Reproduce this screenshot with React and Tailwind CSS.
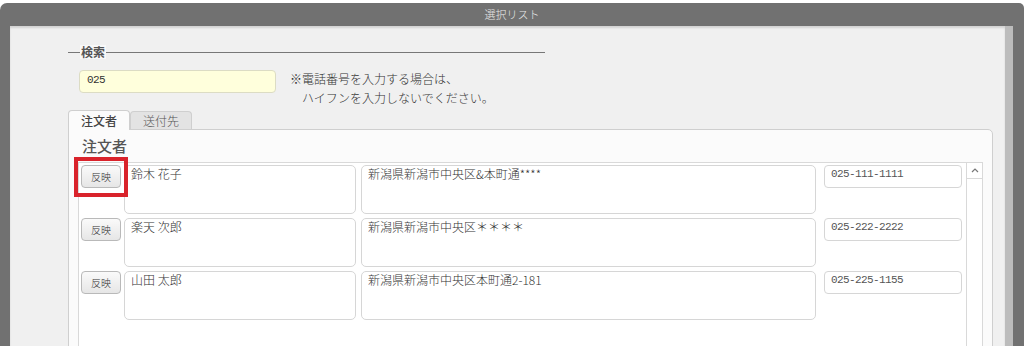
import React from "react";

const jp = { fontFamily: '"Noto Sans CJK JP", "Noto Sans", sans-serif' };
const mono = { fontFamily: '"Liberation Mono", "Noto Sans CJK JP", monospace' };

const rows = [
  { name: "鈴木 花子", addr: "新潟県新潟市中央区&本町通****", tel: "025-111-1111", mark: true },
  { name: "楽天 次郎", addr: "新潟県新潟市中央区＊＊＊＊", tel: "025-222-2222" },
  { name: "山田 太郎", addr: "新潟県新潟市中央区本町通2-181", tel: "025-225-1155" },
];

function Row({ r }) {
  return (
    <div className="flex items-start h-[49px]">
      <div className="relative w-[40px] h-[23px] ml-[2px]">
        <button className="w-[40px] h-[23px] rounded-[4px] border border-[#b9b9b9] bg-gradient-to-b from-[#fafafa] to-[#e6e6e6] text-[10px] leading-none font-light text-[#333] flex items-center justify-center">
          反映
        </button>
        {r.mark && (
          <div className="absolute left-[-7px] top-[-8px] w-[54px] h-[40px] border-[4px] border-[#d9232b]"></div>
        )}
      </div>
      <div className="ml-[3px] w-[232px] h-[49px] rounded-[5px] border border-[#d6d6d6] bg-white px-[6px] text-[12px] leading-[15px] font-light text-[#333]">
        {r.name}
      </div>
      <div className="ml-[5px] w-[455px] h-[49px] rounded-[5px] border border-[#d6d6d6] bg-white px-[6px] text-[12px] leading-[15px] font-light text-[#333]">
        {r.addr}
      </div>
      <div
        className="ml-[8px] w-[138px] h-[23px] rounded-[4px] border border-[#d6d6d6] bg-white px-[6px] text-[11px] leading-[17px] tracking-[-0.6px] text-[#555]"
        style={mono}
      >
        {r.tel}
      </div>
    </div>
  );
}

export default function App() {
  return (
    <div className="w-[1024px] h-[346px] overflow-hidden bg-white pt-[3px]" style={jp}>
      <div className="h-[343px] bg-[#717171] rounded-tl-[7px] rounded-tr-[5px] flex flex-col">
        <div className="h-[23px] flex items-center justify-center text-[11px] font-light text-[#e8e8e8]">
          選択リスト
        </div>
        <div className="flex-1 flex pl-[10px] min-h-0">
          <div className="w-[995px] bg-[#f0f0f0] shadow-[inset_0_2px_2px_rgba(0,0,0,0.12)] pl-[58px] overflow-hidden">
            {/* search fieldset */}
            <div className="mt-[19px] flex items-center h-[14px] w-[477px]">
              <div className="w-[12px] h-px bg-[#777]"></div>
              <div className="px-[1px] bg-[#f8f8f8] text-[12px] leading-[14px] font-bold text-[#555]">検索</div>
              <div className="flex-1 h-px bg-[#777]"></div>
            </div>
            <div className="mt-[10px] flex items-start h-[38px] pl-[11px]">
              <div
                className="mt-[1px] w-[197px] h-[23px] rounded-[4px] border border-[#dcdcc4] bg-[#ffffdc] px-[7px] text-[11px] leading-[18px] tracking-[-0.6px] text-[#333]"
                style={mono}
              >
                025
              </div>
              <div className="ml-[14px] text-[12px] leading-[19px] font-light text-[#333]">
                <div>※電話番号を入力する場合は、</div>
                <div>　ハイフンを入力しないでください。</div>
              </div>
            </div>
            {/* tabs */}
            <div className="mt-[3px] flex items-end h-[19px]">
              <div className="relative z-10 w-[62px] h-[20px] -mb-px rounded-t-[4px] border border-b-0 border-[#cfcfcf] bg-[#fbfbfb] flex items-center justify-center text-[12px] font-medium text-[#444]">
                注文者
              </div>
              <div className="w-[62px] h-[18px] rounded-t-[4px] border border-b-0 border-[#cfcfcf] bg-[#e3e3e3] flex items-center justify-center text-[12px] font-light text-[#555]">
                送付先
              </div>
            </div>
            {/* panel */}
            <div className="w-[925px] h-[240px] border border-[#cfcfcf] rounded-tr-[5px] bg-[#fbfbfb] px-[9px]">
              <div className="mt-[6px] h-[20px] pl-[4px] text-[15px] leading-[20px] font-medium text-[#555]">
                注文者
              </div>
              <div className="mt-[6px] flex border-t border-l border-[#d9d9d9] bg-white h-[200px]">
                <div className="flex-1 pt-[2px] flex flex-col gap-[4px]">
                  {rows.map((r, i) => (
                    <Row key={i} r={r} />
                  ))}
                </div>
                <div className="w-[17px] border-l border-r border-[#d9d9d9] bg-white">
                  <div className="h-[16px] border-b border-[#d9d9d9] flex items-center justify-center">
                    <svg width="8" height="5" viewBox="0 0 8 5">
                      <path d="M1 4 L4 1 L7 4" fill="none" stroke="#777" strokeWidth="1.2" />
                    </svg>
                  </div>
                </div>
              </div>
            </div>
          </div>
          <div className="w-[8px] bg-[#bcbcbc]"></div>
          <div className="flex-1"></div>
        </div>
      </div>
    </div>
  );
}
